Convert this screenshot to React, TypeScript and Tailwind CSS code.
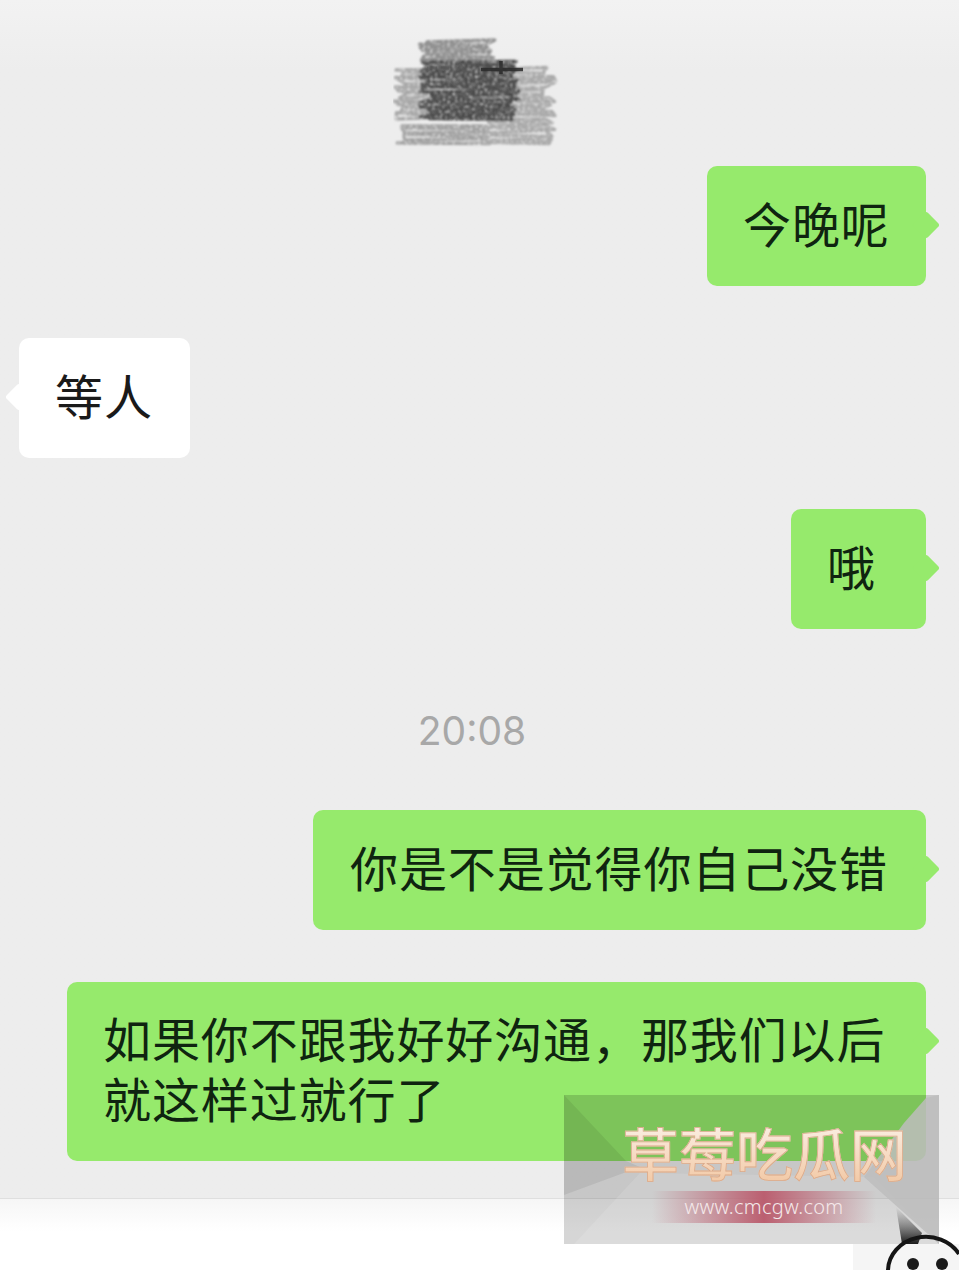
import React from "react";

const font = { fontFamily: '"Noto Sans CJK SC", "Noto Sans", sans-serif' };

function zig(x0: number, x1: number, y0: number, y1: number, step: number, seed: number) {
  let r = seed;
  const rnd = () => {
    r = (r * 9301 + 49297) % 233280;
    return r / 233280;
  };
  let d = "";
  let y = y0;
  let left = true;
  while (y < y1) {
    const a = x0 + rnd() * 14 - 7;
    const b = x1 + rnd() * 14 - 7;
    d += `${d ? "L" : "M"}${(left ? a : b).toFixed(1)} ${y.toFixed(1)} `;
    d += `L${(left ? b : a).toFixed(1)} ${(y - 3 + rnd() * 3).toFixed(1)} `;
    y += step;
    left = !left;
  }
  return d;
}

function Scribble() {
  return (
    <svg width="166" height="112" viewBox="0 0 166 112" className="block">
      <defs>
        <filter id="grain" x="-5%" y="-5%" width="110%" height="110%">
          <feTurbulence type="fractalNoise" baseFrequency="0.4" numOctaves="3" seed="9" result="n" />
          <feColorMatrix
            in="n"
            type="matrix"
            values="0 0 0 0 0  0 0 0 0 0  0 0 0 0 0  0 0 0 -3 2.5"
            result="m"
          />
          <feComposite in="SourceGraphic" in2="m" operator="in" />
          <feGaussianBlur stdDeviation="1" />
        </filter>
      </defs>
      <g filter="url(#grain)" fill="none" strokeLinecap="round" strokeLinejoin="round">
        <path d={zig(32, 96, 6, 26, 3, 11)} stroke="#8f8f8f" strokeWidth="3.5" />
        <path d={zig(8, 36, 34, 86, 3.5, 23)} stroke="#a6a6a6" strokeWidth="3.5" />
        <path d={zig(6, 90, 90, 110, 3.5, 37)} stroke="#a0a0a0" strokeWidth="3.5" />
        <path d={zig(90, 156, 34, 108, 3.5, 51)} stroke="#a8a8a8" strokeWidth="3.5" />
        <path d={zig(34, 120, 26, 84, 2.5, 67)} stroke="#4a4a4a" strokeWidth="3.5" />
      </g>
      <path d="M34 32h10M48 32h8" stroke="#555" strokeWidth="3" opacity="0.55" />
      <path d="M88 33.500h42M108 25v13" stroke="#2a2a2a" strokeWidth="3.500" opacity="0.85" />
    </svg>
  );
}

function Bubble({
  side,
  children,
  className = "",
}: {
  side: "left" | "right";
  children: React.ReactNode;
  className?: string;
}) {
  const isRight = side === "right";
  return (
    <div
      className={`relative rounded-[10px] text-[48px] tracking-[0.9px] leading-[60px] whitespace-nowrap ${
        isRight ? "bg-[#96ea6c] text-[#0f2410]" : "bg-white text-[#1a1a1a]"
      } ${className}`}
    >
      <span
        className={`absolute top-[49px] w-5 h-5 rotate-45 rounded-[3px] ${
          isRight ? "right-[-10px] bg-[#96ea6c]" : "left-[-10px] bg-white"
        }`}
      />
      <div className="relative">{children}</div>
    </div>
  );
}

function Watermark() {
  return (
    <div className="absolute left-[564px] top-[1095px] w-[375px] h-[149px] bg-black/[0.16] overflow-hidden">
      <svg width="375" height="149" viewBox="0 0 375 149" className="absolute inset-0">
        <defs>
          <linearGradient id="tail" x1="0" y1="0" x2="0" y2="1">
            <stop offset="0" stopColor="#555" stopOpacity="0" />
            <stop offset="1" stopColor="#111" stopOpacity="0.95" />
          </linearGradient>
        </defs>
        <polygon points="0,0 62,66 76,72 0,100" fill="#000" opacity="0.07" />
        <polygon points="76,78 310,82 375,149 10,149" fill="#fff" opacity="0.12" />
        <polygon points="362,3 340,28 300,82 375,149 375,0" fill="#bdbdbd" opacity="0.85" />
        <polygon points="332,112 358,138 354,149 338,149" fill="url(#tail)" />
      </svg>
      <div
        className="absolute left-[58px] top-[23px] w-[285px] text-[57px] leading-[66px] whitespace-nowrap font-medium text-transparent bg-clip-text bg-gradient-to-b from-[#fbf3ea] to-[#f2c8a4] [-webkit-text-stroke:0.8px_#d9a98a]"
        style={font}
      >
        草莓吃瓜网
      </div>
      <div className="absolute left-[88px] top-[96px] w-[224px] h-[32px] flex items-center justify-center text-[20px] font-light tracking-[0.3px] text-[#f4e9ea] bg-gradient-to-r from-transparent via-[#bb5f70] to-transparent">
        <span style={{ fontFamily: '"Noto Sans", sans-serif' }}>www.cmcgw.com</span>
      </div>
    </div>
  );
}

export default function App() {
  return (
    <div className="relative w-[959px] h-[1280px] overflow-hidden bg-white flex flex-col" style={font}>
      <div className="h-[1198px] flex flex-col shrink-0 px-[33px] bg-gradient-to-b from-[#f2f2f2] to-[#ededed] to-[6%]">
        <div className="h-[166px] flex justify-center pt-[36px]">
          <div className="ml-[-7px]">
            <Scribble />
          </div>
        </div>
        <div className="flex justify-end">
          <Bubble side="right" className="w-[219px] h-[120px] pl-[36px] pt-[26px]">今晚呢</Bubble>
        </div>
        <div className="flex justify-start mt-[52px] ml-[-14px]">
          <Bubble side="left" className="w-[171px] h-[120px] pl-[36px] pt-[26px]">等人</Bubble>
        </div>
        <div className="flex justify-end mt-[51px]">
          <Bubble side="right" className="w-[135px] h-[120px] pl-[36px] pt-[26px]">哦</Bubble>
        </div>
        <div
          className="h-[181px] flex items-center justify-center text-[39px] leading-none text-[#a8a8a8] ml-[-15px] pt-[22px]"
          style={{ fontFamily: 'Inter, "Noto Sans", sans-serif' }}
        >
          20:08
        </div>
        <div className="flex justify-end">
          <Bubble side="right" className="w-[613px] h-[120px] pl-[37px] pt-[26px]">你是不是觉得你自己没错</Bubble>
        </div>
        <div className="flex justify-end mt-[52px]">
          <Bubble side="right" className="w-[859px] h-[179px] pl-[36px] pt-[25px]">
            如果你不跟我好好沟通{"\uFF0C"}那我们以后
            <br />
            就这样过就行了
          </Bubble>
        </div>
      </div>
      <div className="flex-1 border-t border-[#dfdfdf] bg-gradient-to-b from-[#f6f6f6] to-white to-[40%]" />
      <Watermark />
      <div className="absolute right-0 top-[1244px] w-[106px] h-[26px] bg-[#f5f5f5]" />
      <svg width="106" height="50" viewBox="853 1230 106 50" className="absolute right-0 top-[1230px]">
        <path d="M888 1270 A38 34 0 0 1 959 1254" fill="none" stroke="#151515" strokeWidth="4" />
        <circle cx="913" cy="1264" r="6" fill="#1a1a1a" />
        <circle cx="942" cy="1264" r="6" fill="#1a1a1a" />
        <rect x="853" y="1270" width="106" height="10" fill="#fff" />
      </svg>
    </div>
  );
}
